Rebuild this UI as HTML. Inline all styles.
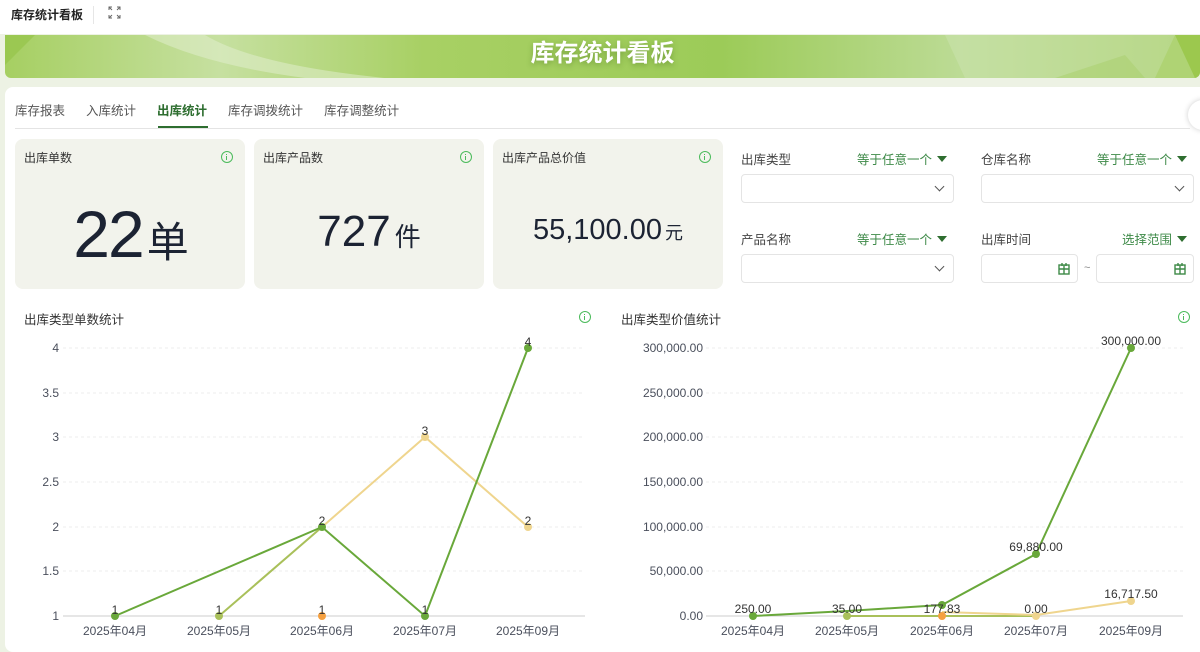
<!DOCTYPE html>
<html><head><meta charset="utf-8"><style>
*{box-sizing:border-box;margin:0;padding:0}
body{width:1200px;height:652px;overflow:hidden;background:#fff;font-family:"Liberation Sans","Noto Sans CJK SC",sans-serif;position:relative;color:#333}
.a{position:absolute}
.card{position:absolute;top:139px;width:230px;height:150px;background:#f2f3ec;border-radius:8px}
.card .l{position:absolute;left:9px;top:10px;font-size:12px;color:#333}
.info{position:absolute;width:12px;height:12px;border:1.3px solid #4cbb5c;border-radius:50%;}
.info:after{content:"";position:absolute;left:4px;top:4px;width:1.4px;height:4px;background:#4cbb5c}
.info:before{content:"";position:absolute;left:4px;top:1.5px;width:1.4px;height:1.4px;background:#4cbb5c}
.num{position:absolute;left:0;right:0;text-align:center;color:#1c2333}
.fl{position:absolute;font-size:12.5px;color:#444}
.fr{position:absolute;font-size:12.5px;color:#3e8a48;text-align:right}
.fr i{display:inline-block;width:0;height:0;border-left:5px solid transparent;border-right:5px solid transparent;border-top:6px solid #2e6e30;margin-left:5px;vertical-align:2px}
.box{position:absolute;height:29px;border:1px solid #e4e4e4;border-radius:4px;background:#fff}
.chev{position:absolute;right:10px;top:8px;width:7px;height:7px;border-right:1.5px solid #555;border-bottom:1.5px solid #555;transform:rotate(45deg)}
</style></head><body>
<div class="a" style="left:11px;top:6px;font-size:12px;font-weight:bold;color:#222">库存统计看板</div>
<div class="a" style="left:93px;top:6px;width:1px;height:18px;background:#e6e6e6"></div>
<svg class="a" style="left:108px;top:6px" width="13" height="13" viewBox="0 0 13 13" fill="none" stroke="#666" stroke-width="1"><path d="M1 4V1h3M1 1l3 3M12 4V1H9M12 1L9 4M1 9v3h3M1 12l3-3M12 9v3H9M12 12L9 9"/></svg>
<div class="a" style="left:0;top:34px;width:1200px;height:618px;background:#edf2e4"></div>
<div class="a" style="left:5px;top:35px;width:1195px;height:43px;border-radius:0 0 6px 6px;overflow:hidden;background:linear-gradient(90deg,#a6cf62 0%,#c6e0a0 18%,#a8d064 35%,#9ccb58 60%,#bcdb95 80%,#a8cf6a 100%)">
<svg width="1195" height="43" style="position:absolute;left:0;top:0"><path d="M0 30 L30 0 L0 0Z" fill="#96c44a" opacity=".7"/><path d="M140 0 Q200 30 300 43 L380 43 Q250 30 200 0Z" fill="#e4f0d2" opacity=".5"/><path d="M1050 43 L1120 20 L1140 43Z" fill="#96c44a" opacity=".6"/><path d="M1170 0 L1150 43 L1195 43 L1195 0Z" fill="#9cc84e"/><path d="M940 0 L1170 0 L1190 43 L960 43Z" fill="#d4e8bc" opacity=".35"/></svg>
<div style="position:absolute;left:0;right:0;top:-2px;text-align:center;font-size:24px;font-weight:bold;color:#fff;text-shadow:0 2px 6px rgba(60,100,20,.4)">库存统计看板</div></div>
<div class="a" style="left:5px;top:87px;width:1195px;height:565px;background:#fff;border-radius:8px 0 0 8px"></div>
<div class="a" style="left:1188px;top:100px;width:30px;height:30px;border-radius:50%;background:#fff;box-shadow:0 0 6px rgba(0,0,0,.2)"></div>
<div class="a" style="top:100px;left:15px;font-size:12.5px;color:#555;white-space:nowrap"><span>库存报表</span><span style="margin-left:21px">入库统计</span><span style="margin-left:21px;color:#2e6e30;font-weight:bold">出库统计</span><span style="margin-left:21px">库存调拨统计</span><span style="margin-left:21px">库存调整统计</span></div>
<div class="a" style="left:15px;top:128px;width:1175px;height:1px;background:#e4e4e4"></div>
<div class="a" style="left:158px;top:126px;width:50px;height:2px;background:#2e6e30"></div>

<div class="card" style="left:15px"><div class="l">出库单数</div><div class="info" style="left:206px;top:12px"></div><div class="num" style="top:55px;font-size:66px;line-height:80px;letter-spacing:-2px">22<span style="font-size:42px;margin-left:4px">单</span></div></div>
<div class="card" style="left:254px"><div class="l">出库产品数</div><div class="info" style="left:206px;top:12px"></div><div class="num" style="top:66px;font-size:44px;line-height:54px">727<span style="font-size:26px;margin-left:4px">件</span></div></div>
<div class="card" style="left:493px"><div class="l">出库产品总价值</div><div class="info" style="left:206px;top:12px"></div><div class="num" style="top:73px;font-size:29px;line-height:36px">55,100.00<span style="font-size:18px;margin-left:3px">元</span></div></div>

<div class="fl" style="left:741px;top:149px">出库类型</div><div class="fr" style="left:840px;width:107px;top:149px">等于任意一个<i></i></div>
<div class="box" style="left:741px;top:174px;width:213px"><div class="chev"></div></div>
<div class="fl" style="left:981px;top:149px">仓库名称</div><div class="fr" style="left:1080px;width:107px;top:149px">等于任意一个<i></i></div>
<div class="box" style="left:981px;top:174px;width:213px"><div class="chev"></div></div>
<div class="fl" style="left:741px;top:229px">产品名称</div><div class="fr" style="left:840px;width:107px;top:229px">等于任意一个<i></i></div>
<div class="box" style="left:741px;top:254px;width:213px"><div class="chev"></div></div>
<div class="fl" style="left:981px;top:229px">出库时间</div><div class="fr" style="left:1080px;width:107px;top:229px">选择范围<i></i></div>
<div class="box" style="left:981px;top:254px;width:97px"><svg style="position:absolute;right:7px;top:8px" width="12" height="12" viewBox="0 0 12 12" fill="none" stroke="#3e8a48" stroke-width="1.4"><rect x="1" y="2" width="10" height="9"/><path d="M1 6h10M6 2v9M4 0v3M8 0v3"/></svg></div>
<div class="a" style="left:1084px;top:262px;font-size:11px;color:#888">~</div>
<div class="box" style="left:1096px;top:254px;width:98px"><svg style="position:absolute;right:7px;top:8px" width="12" height="12" viewBox="0 0 12 12" fill="none" stroke="#3e8a48" stroke-width="1.4"><rect x="1" y="2" width="10" height="9"/><path d="M1 6h10M6 2v9M4 0v3M8 0v3"/></svg></div>

<div class="a" style="left:24px;top:309px;font-size:12.5px;color:#333">出库类型单数统计</div><div class="info" style="left:579px;top:311px"></div>
<div class="a" style="left:621px;top:309px;font-size:12.5px;color:#333">出库类型价值统计</div><div class="info" style="left:1178px;top:311px"></div>

<svg class="a" style="left:0;top:0" width="1200" height="652" font-family="Liberation Sans,Noto Sans CJK SC,sans-serif" font-size="12" fill="#4a4f5c">
<g stroke="#ececec" stroke-dasharray="3 3"><path d="M63 348H585M63 393H585M63 437H585M63 482H585M63 527H585M63 571H585"/><path d="M706 348H1183M706 393H1183M706 437H1183M706 482H1183M706 527H1183M706 571H1183"/></g>
<path d="M63 616H585M706 616H1183" stroke="#ccc"/>
<g text-anchor="end"><text x="59" y="352">4</text><text x="59" y="397">3.5</text><text x="59" y="441">3</text><text x="59" y="486">2.5</text><text x="59" y="531">2</text><text x="59" y="575">1.5</text><text x="59" y="620">1</text>
<text x="703" y="352">300,000.00</text><text x="703" y="397">250,000.00</text><text x="703" y="441">200,000.00</text><text x="703" y="486">150,000.00</text><text x="703" y="531">100,000.00</text><text x="703" y="575">50,000.00</text><text x="703" y="620">0.00</text></g>
<g text-anchor="middle"><text x="115" y="635">2025年04月</text><text x="219" y="635">2025年05月</text><text x="322" y="635">2025年06月</text><text x="425" y="635">2025年07月</text><text x="528" y="635">2025年09月</text>
<text x="753" y="635">2025年04月</text><text x="847" y="635">2025年05月</text><text x="942" y="635">2025年06月</text><text x="1036" y="635">2025年07月</text><text x="1131" y="635">2025年09月</text></g>
<g fill="none" stroke-width="2"><path d="M219 616L322 527" stroke="#a9c05a"/><path d="M322 527L425 437L528 527" stroke="#efd58e"/><path d="M115 616L322 527L425 616L528 348" stroke="#69a83a"/>
<path d="M847 616H1036" stroke="#a9c05a"/><path d="M942 612L1036 615L1131 601" stroke="#efd58e"/><path d="M753 616L847 611L942 605L1036 554L1131 348" stroke="#69a83a"/></g>
<g><circle cx="115" cy="616" r="4" fill="#69a83a"/><circle cx="219" cy="616" r="4" fill="#a9c05a"/><circle cx="322" cy="616" r="4" fill="#f5a040"/><circle cx="322" cy="527" r="4" fill="#69a83a"/><circle cx="425" cy="437" r="4" fill="#efd58e"/><circle cx="425" cy="616" r="4" fill="#69a83a"/><circle cx="528" cy="348" r="4" fill="#69a83a"/><circle cx="528" cy="527" r="4" fill="#efd58e"/>
<circle cx="753" cy="616" r="4" fill="#69a83a"/><circle cx="847" cy="616" r="4" fill="#a9c05a"/><circle cx="942" cy="616" r="4" fill="#f5a040"/><circle cx="942" cy="605" r="4" fill="#69a83a"/><circle cx="1036" cy="616" r="4" fill="#efd58e"/><circle cx="1036" cy="554" r="4" fill="#69a83a"/><circle cx="1131" cy="348" r="4" fill="#69a83a"/><circle cx="1131" cy="601" r="4" fill="#efd58e"/></g>
<g text-anchor="middle" font-size="12" fill="#333"><text x="115" y="614">1</text><text x="219" y="614">1</text><text x="322" y="614">1</text><text x="322" y="525">2</text><text x="425" y="435">3</text><text x="425" y="614">1</text><text x="528" y="346">4</text><text x="528" y="525">2</text>
<text x="753" y="613">250.00</text><text x="847" y="613">35.00</text><text x="942" y="613">177.83</text><text x="1036" y="613">0.00</text><text x="1036" y="551">69,880.00</text><text x="1131" y="345">300,000.00</text><text x="1131" y="598">16,717.50</text></g>
</svg>
</body></html>
